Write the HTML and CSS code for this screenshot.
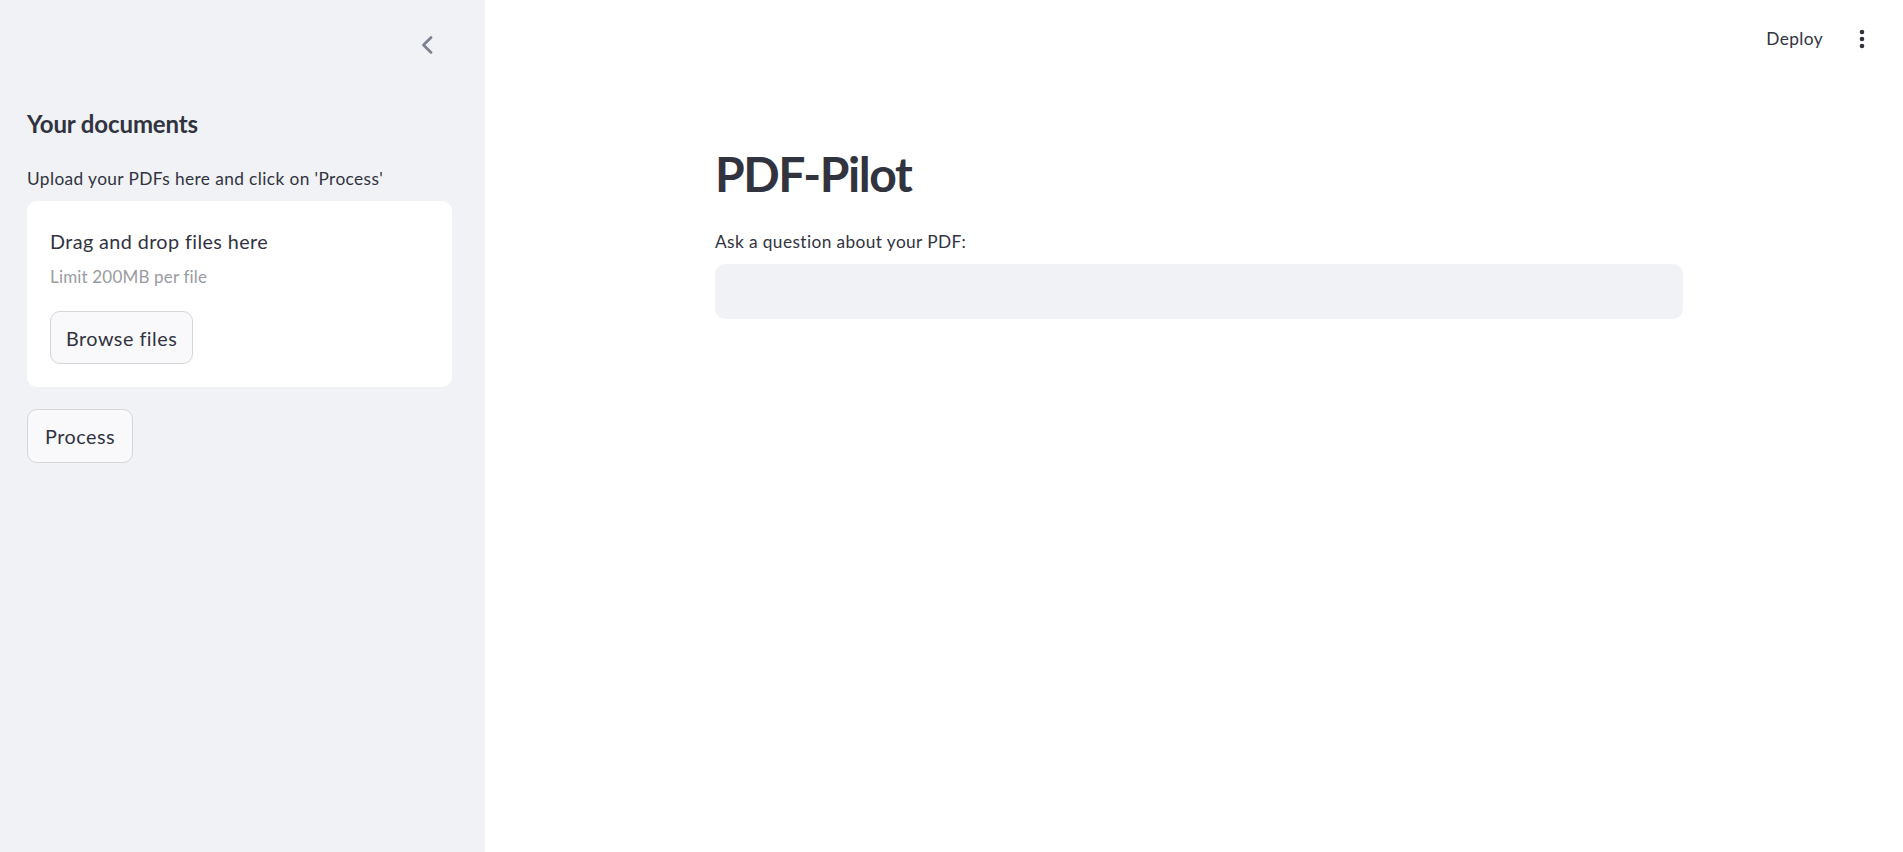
FILE: index.html
```html
<!DOCTYPE html>
<html lang="en">
<head>
<meta charset="utf-8">
<title>PDF-Pilot</title>
<link rel="stylesheet" href="styles.css">
</head>
<body>
<div class="app">
  <aside class="sidebar">
    <div class="side-head">
      <button class="collapse" aria-label="Collapse sidebar">
        <svg width="14" height="20" viewBox="0 0 14 20"><path d="M11 2.5 L3.5 10 L11 17.5" fill="none" stroke="#7d8192" stroke-width="2.8" stroke-linecap="round" stroke-linejoin="round"/></svg>
      </button>
    </div>
    <h3 class="side-title">Your documents</h3>
    <p class="side-text">Upload your PDFs here and click on 'Process'</p>
    <div class="dropzone">
      <div class="drop-title">Drag and drop files here</div>
      <div class="drop-limit">Limit 200MB per file</div>
      <button class="btn browse">Browse files</button>
    </div>
    <button class="btn process">Process</button>
  </aside>
  <main class="main">
    <header class="topbar">
      <span class="deploy">Deploy</span>
      <svg class="menu" width="6" height="20" viewBox="0 0 6 20"><circle cx="3" cy="3" r="2.3" fill="#31333f"/><circle cx="3" cy="10" r="2.3" fill="#31333f"/><circle cx="3" cy="17" r="2.3" fill="#31333f"/></svg>
    </header>
    <section class="content">
      <h1 class="title">PDF-Pilot</h1>
      <label class="label">Ask a question about your PDF:</label>
      <div class="input"></div>
    </section>
  </main>
</div>
</body>
</html>
```

FILE: styles.css
```css
* { box-sizing: border-box; }
html, body { margin: 0; padding: 0; }
body {
  font-family: "Source Sans Pro", Lato, "Noto Sans", sans-serif;
  color: #31333f;
  background: #ffffff;
  letter-spacing: 0.025em;
}
.app {
  display: flex;
  height: 852px;
}
.sidebar {
  width: 485px;
  flex: none;
  background: #f0f2f6;
  padding: 0 33px 0 27px;
  display: flex;
  flex-direction: column;
  align-items: flex-start;
}
.side-head {
  height: 90px;
  width: 100%;
  display: flex;
  align-items: center;
  justify-content: flex-end;
  padding-right: 18px;
}
.collapse {
  background: none;
  border: none;
  padding: 0;
  width: 14px;
  height: 20px;
  display: flex;
}
.side-title {
  margin: 18px 0 0;
  font-size: 24px;
  line-height: 32px;
  font-weight: 700;
  letter-spacing: -0.005em;
}
.side-text {
  margin: 27px 0 0;
  font-size: 17.3px;
  line-height: 24px;
}
.dropzone {
  margin-top: 10px;
  width: 425px;
  background: #ffffff;
  border-radius: 10px;
  padding: 27px 23px 23px;
  display: flex;
  flex-direction: column;
  align-items: flex-start;
}
.drop-title {
  font-size: 19.8px;
  line-height: 26px;
}
.drop-limit {
  margin-top: 12px;
  font-size: 17px;
  line-height: 22px;
  color: #9a9ba2;
  letter-spacing: 0.01em;
}
.btn {
  font-family: inherit;
  letter-spacing: 0.025em;
  color: #31333f;
  font-size: 19.8px;
  background: #f9f9fb;
  border: 1px solid #d6d6d9;
  border-radius: 10px;
  height: 53px;
  padding: 0 17px;
  cursor: pointer;
}
.dropzone .browse {
  margin-top: 23px;
  padding: 0 15px;
}
.process {
  margin-top: 22px;
  height: 54px;
}
.main {
  flex: 1;
  display: flex;
  flex-direction: column;
}
.topbar {
  height: 77px;
  display: flex;
  align-items: center;
  justify-content: flex-end;
  gap: 36px;
  padding-right: 38px;
}
.deploy {
  font-size: 17.3px;
  line-height: 24px;
}
.menu { display: block; }
.content {
  padding: 65px 220px 0 230px;
}
.title {
  margin: 0;
  font-size: 48px;
  line-height: 64px;
  font-weight: 700;
  letter-spacing: -0.03em;
}
.label {
  display: block;
  margin-top: 25px;
  font-size: 17.3px;
  line-height: 22px;
}
.input {
  margin-top: 11px;
  height: 55px;
  background: #f0f2f6;
  border-radius: 10px;
}
```
